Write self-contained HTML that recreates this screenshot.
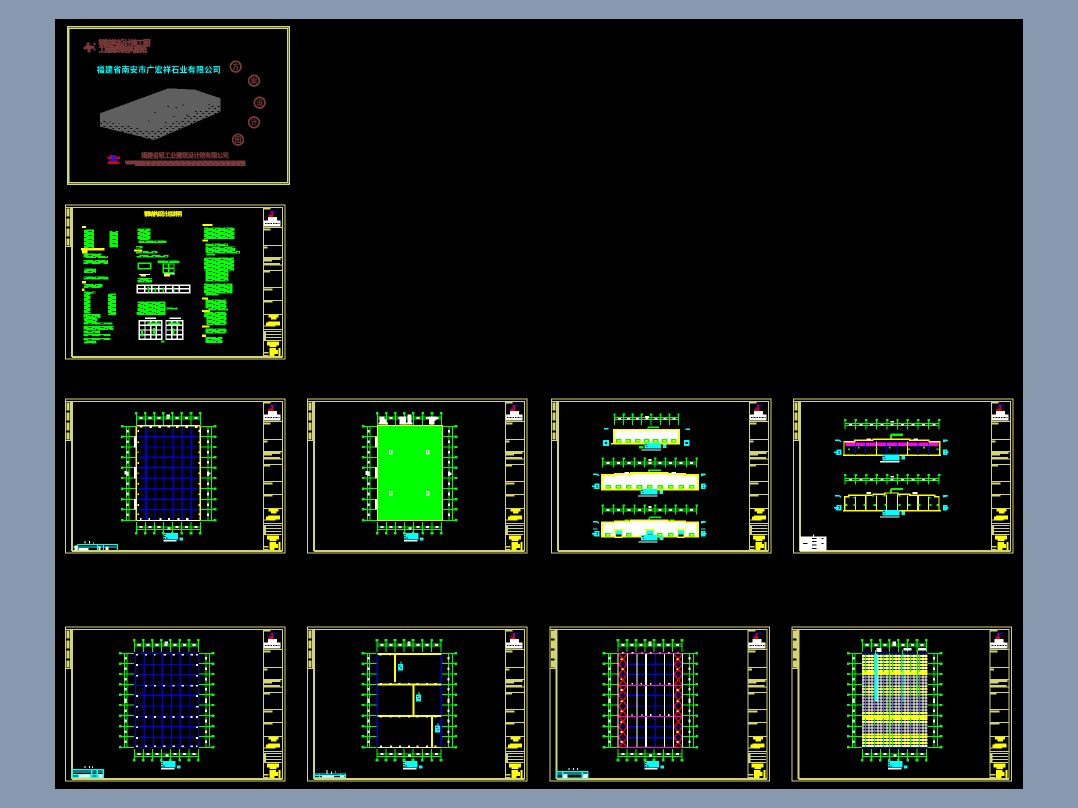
<!DOCTYPE html>
<html lang="zh"><head><meta charset="utf-8"><title>钢结构厂房图纸</title>
<style>
html,body{margin:0;padding:0;width:1078px;height:808px;overflow:hidden;background:#8898af}
svg{display:block}
.f{font-family:"Liberation Sans","Noto Sans CJK SC",sans-serif}
</style></head><body>
<svg width="1078" height="808" viewBox="0 0 1078 808" xmlns="http://www.w3.org/2000/svg" shape-rendering="crispEdges">
<defs>
<pattern id="txt" width="36" height="12" patternUnits="userSpaceOnUse"><rect width="36" height="12" fill="#0f0"/><path d="M0 5h5M14 11h8M29 2h4" stroke="#000" stroke-width="3"/></pattern>
<pattern id="hat" width="27" height="9" patternUnits="userSpaceOnUse"><rect width="27" height="9" fill="#000"/><path d="M0 3H27" stroke="#ff0" stroke-width="5"/><path d="M6 0V9M15 0V9" stroke="#fff" stroke-width="3"/><path d="M22 0V9" stroke="#0f0" stroke-width="3"/></pattern>
<pattern id="hatw" width="27" height="9" patternUnits="userSpaceOnUse"><rect width="27" height="9" fill="#000"/><path d="M0 3H27" stroke="#fff" stroke-width="4"/><path d="M6 0V9M15 0V9" stroke="#fff" stroke-width="3"/><path d="M22 0V9" stroke="#66f" stroke-width="3"/></pattern>
<pattern id="lowwall" width="18" height="15" patternUnits="userSpaceOnUse"><rect width="18" height="15" fill="#5f5f5f"/><path d="M1 4h6M10 11h5" stroke="#000" stroke-width="3"/></pattern>

<g id="frame">
<rect x="16.5" y="11.5" width="658" height="463" fill="none" stroke="#d4d470" stroke-width="3"/>
<rect x="33" y="20" width="6" height="448" fill="#d4d470"/>
<path d="M18 20H667V468" fill="none" stroke="#d4d470" stroke-width="3"/>
<path d="M36 468H667" stroke="#d4d470" stroke-width="6"/>
<rect x="30" y="20" width="9" height="117" fill="#d4d470"/>
<rect x="18" y="135" width="21" height="3" fill="#d4d470"/>
<path d="M24 22V134" stroke="#d4d470" stroke-width="10" stroke-dasharray="24 6"/>
<path d="M610 20V468" stroke="#d4d470" stroke-width="3"/>
<path d="M610 80H667M610 133H667M610 170H667M610 192H667M610 208H667M610 260H667M610 298H667M610 340H667M610 385H667" stroke="#d4d470" stroke-width="3"/>
<path d="M612 85h20M612 139h10M612 174h50M612 178h24M612 189h48M612 212h18M612 265h26M612 302h26" stroke="#d4d470" stroke-width="6"/>
<path d="M612 22h20" stroke="#d4d470" stroke-width="6"/>
<path d="M612 76V58H624V48H651V58H662V76Z" fill="#fff"/>
<rect x="626" y="40" width="14" height="8" fill="#e00000"/>
<rect x="632" y="30" width="7" height="10" fill="#e00000"/>
<rect x="628" y="33" width="6" height="7" fill="#0000e0"/>
<rect x="640" y="28" width="10" height="6" fill="#0000e0"/>
<path d="M615 68h44" stroke="#000" stroke-width="3" stroke-dasharray="5 3"/>
<path d="M625 342h30v7h-6v7h-16v-7h-8ZM624 362h36v11h-14v4h-24v-4h-4v-8h6Z" fill="#ff0"/>
<path d="M612 375h16" stroke="#d4d470" stroke-width="4"/>
<path d="M612 392h52M612 401h52M612 410h52M612 419h52" stroke="#d4d470" stroke-width="3"/>
<path d="M615 390V420" stroke="#d4d470" stroke-width="6"/>
<path d="M621 421h36v12h-8v5h-20v-5h-8ZM628 441h20v6h6v12h-10v6h-16ZM656 441h6v24h-6Z" fill="#ff0"/>
<path d="M612 455h14M612 464h14" stroke="#d4d470" stroke-width="5"/>
</g>

<g id="ax">
<path fill="none" stroke="#00ff00" stroke-width="3" d="M229 55V90M256 55V90M283 55V90M310 55V90M337 55V90M365 55V90M393 55V90M421 55V90M229 381V415M256 381V415M283 381V415M310 381V415M337 381V415M365 381V415M393 381V415M421 381V415M229 66H421M229 72H421M229 396H421M229 404H421M187 94H228M187 125H228M187 156H228M187 187H228M187 218H228M187 249H228M187 281H228M187 313H228M187 343H228M187 376H228M423 94H465M423 125H465M423 156H465M423 187H465M423 218H465M423 249H465M423 281H465M423 313H465M423 343H465M423 376H465M200 94V376M207 94V376M444 94V376M455 94V376"/>
<path fill="none" stroke="#00ff00" stroke-width="7" d="M225 55h8M252 55h8M279 55h8M306 55h8M333 55h8M361 55h8M389 55h8M417 55h8M225 415h8M252 415h8M279 415h8M306 415h8M333 415h8M361 415h8M389 415h8M417 415h8M183 94h8M183 125h8M183 156h8M183 187h8M183 218h8M183 249h8M183 281h8M183 313h8M183 343h8M183 376h8M461 94h8M461 125h8M461 156h8M461 187h8M461 218h8M461 249h8M461 281h8M461 313h8M461 343h8M461 376h8"/>
<path fill="none" stroke="#fff" stroke-width="6" d="M239 69h9M266 69h9M293 69h9M320 61h10M320 69h9M347 69h9M375 69h9M403 69h9M239 396h9M266 396h9M293 396h9M322 400h9M347 396h9M375 396h9M403 396h9M203 105v8M203 136v8M203 168v8M203 198v8M203 229v14M203 262v8M203 292v10M203 325v8M203 355v8M444 105v8M444 136v8M444 168v8M444 198v8M444 229v14M444 262v8M444 292v10M444 325v8M444 355v8"/>
</g>

<g id="ttl">
<rect x="310" y="414" width="44" height="19" fill="#00ffff"/>
<path d="M312 419h4M312 424h4M318 429h4M312 430h3" stroke="#000" stroke-width="3"/>
<rect x="310" y="435" width="40" height="5" fill="#fff"/>
<rect x="358" y="427" width="11" height="10" fill="#00ffff"/>
</g>

<g id="leg">
<path fill="none" stroke="#00ffff" stroke-width="3" d="M36 456H172M52 449H172V466M52 449V466M112 449V466M130 449V466"/>
<path d="M44 452h8v14h-8ZM56 459h30v7H56ZM115 453h6v12h-6ZM136 455h10v10h-10Z" fill="#fff"/>
<path d="M75 438v8M88 438v8M100 442v4" stroke="#fff" stroke-width="3"/>
</g>

<g id="ax8">
<path fill="none" stroke="#00ff00" stroke-width="3" d="M205 58V90M233 58V90M260 58V90M287 58V90M315 58V90M343 58V90M370 58V90M397 58V90M205 67H397M205 74H397"/>
<path fill="none" stroke="#00ff00" stroke-width="6" d="M202 58h7M230 58h7M257 58h7M284 58h7M312 58h7M340 58h7M367 58h7M394 58h7"/>
<path fill="none" stroke="#fff" stroke-width="5" d="M216 71h9M243 71h9M270 71h9M297 66h12M298 71h9M325 71h9M352 71h9M380 71h9"/>
</g>
<g id="ax10">
<path fill="none" stroke="#00ff00" stroke-width="3" d="M170 0V28M202 0V28M233 0V28M265 0V28M296 0V28M327 0V28M358 0V28M389 0V28M421 0V28M452 0V28M170 11H452M170 17H452"/>
<path fill="none" stroke="#00ff00" stroke-width="6" d="M167 0h7M199 0h7M230 0h7M262 0h7M293 0h7M324 0h7M355 0h7M386 0h7M418 0h7M449 0h7"/>
<path fill="none" stroke="#fff" stroke-width="5" d="M182 14h9M213 14h9M245 14h9M276 14h9M307 5h10M307 14h9M338 14h9M369 14h9M401 14h9M432 14h9"/>
</g>
<g id="win"><rect width="17" height="11" fill="#00ff00"/><rect x="4" y="3" width="9" height="5" fill="#ff0"/></g>
<g id="bld">
<path d="M168 6H207V3H255V0H365V3H417V6H456V49H168Z" fill="#fff" stroke="#ff0" stroke-width="5"/>
<path d="M165 50H459" stroke="#ff0" stroke-width="4"/>
</g>
<g id="ec">
<path fill="none" stroke="#00ffff" stroke-width="4" d="M141 0h12l6 4M138 36h16M142 41h10M465 0h14l-14 4M466 36h16M466 41h10"/>
<path d="M148 30h10v12h-10ZM468 30h8v12h-8Z" fill="none" stroke="#00ffff" stroke-width="5"/>
</g>
<g id="cyb"><rect width="50" height="17" fill="#00ffff"/><rect x="-8" y="19" width="58" height="4" fill="#fff"/><rect x="56" y="4" width="11" height="11" fill="#00ffff"/><path d="M3 5h4M6 11h3" stroke="#000" stroke-width="3"/></g>
<g id="dbox"><rect width="11" height="14" fill="#fff"/><rect x="3" y="3" width="5" height="8" fill="#00ff00"/></g>
<g id="cyn"><rect y="8" width="15" height="20" fill="#00ffff"/><path d="M9 0V8" stroke="#00ffff" stroke-width="3"/><path d="M3 14h4M8 20h4" stroke="#000" stroke-width="3"/></g>
</defs>

<rect width="1078" height="808" fill="#8898af"/>
<rect x="55" y="19" width="968" height="770" fill="#000"/>

<!-- Cover sheet -->
<svg x="55" y="15" width="250" height="180" viewBox="0 0 750 540">
<rect x="38.5" y="35.5" width="664" height="472" fill="none" stroke="#d8d870" stroke-width="5"/>
<rect x="42" y="41" width="655" height="462" fill="none" stroke="#d8d870" stroke-width="3"/>
<g fill="#7a3a3a">
<path d="M85 97l10-6V83h9v8l14 2v7l-12 2v11h-8V102l-13 2Z"/>
<rect x="116" y="84" width="6" height="6"/><rect x="116" y="100" width="6" height="6"/>
</g>
<text class="f" x="130" y="92" font-size="23" font-weight="700" fill="#7a3a3a" stroke="#7a3a3a" stroke-width="1.5" textLength="157">钢结构设计施工图</text>
<text class="f" x="130" y="111" font-size="21" font-weight="700" fill="#7a3a3a" stroke="#7a3a3a" stroke-width="1.5" textLength="147">工程建筑结构图纸</text>
<text class="f" x="125" y="173" font-size="24" font-weight="700" fill="#00ffff" textLength="372" lengthAdjust="spacing">福建省南安市广宏祥石业有限公司</text>
<path d="M135 295L340 220L420 224L497 250V290L298 375L135 335Z" fill="url(#lowwall)"/>
<path d="M135 295L340 220L420 224L497 250V262L420 295L300 347L270 345L135 312Z" fill="#5f5f5f"/>
<path d="M298 293h4M338 275h4M362 278h4M382 270h4M420 290h4M460 268h4M330 322h4M355 305h4M280 318h4M395 300h4" stroke="#000" stroke-width="3"/>
<g fill="none" stroke="#7a3a3a" stroke-width="5">
<circle cx="542" cy="155" r="16"/><circle cx="597" cy="197" r="16"/><circle cx="614" cy="263" r="16"/><circle cx="597" cy="322" r="16"/><circle cx="549" cy="374" r="16"/>
</g>
<g class="f" font-size="20" fill="#7a3a3a" text-anchor="middle" font-weight="700">
<text x="542" y="162">方</text><text x="597" y="204">案</text><text x="614" y="270">设</text><text x="597" y="329">计</text><text x="549" y="381">图</text>
</g>
<path d="M157 425h8v-5h16v5h14v7h-10v8h8v7h-34v-7h4v-8h-6Z" fill="#e00000"/>
<path d="M170 420h8v8h8v12h-22v-8h6Z" fill="#1818e0"/>
<text class="f" x="258" y="427" font-size="19" font-weight="700" fill="#7a3a3a" stroke="#7a3a3a" stroke-width=".8" textLength="264">福建省轻工业建筑设计院有限公司</text>
<rect x="210" y="436" width="362" height="8" fill="#7a3a3a"/>
<rect x="240" y="444" width="332" height="9" fill="#7a3a3a"/>
<path d="M270 440h290" stroke="#000" stroke-width="2" stroke-dasharray="3 14"/>
<path d="M270 449h295" stroke="#000" stroke-width="2" stroke-dasharray="4 11"/>
<rect x="212" y="444" width="50" height="5" fill="#7a3a3a"/>
</svg>

<!-- Design notes -->
<svg x="60" y="200" width="230" height="165" viewBox="0 0 690 495">
<g transform="translate(0 3)"><use href="#frame"/></g>
<text class="f" x="252" y="48" font-size="17" font-weight="700" fill="#ff0" stroke="#ff0" stroke-width=".8" textLength="114">钢结构设计总说明</text>
<g fill="url(#txt)">
<rect x="72" y="88" width="30" height="56"/><rect x="148" y="93" width="26" height="50"/><rect x="70" y="160" width="54" height="14"/><rect x="70" y="168" width="74" height="6"/><rect x="70" y="180" width="74" height="12"/><rect x="72" y="205" width="36" height="14"/><rect x="70" y="230" width="76" height="8"/><rect x="72" y="252" width="56" height="12"/><rect x="72" y="275" width="34" height="5"/><rect x="72" y="280" width="20" height="60"/><rect x="144" y="280" width="24" height="65"/><rect x="70" y="342" width="52" height="12"/><rect x="72" y="352" width="40" height="16"/><rect x="70" y="368" width="88" height="6"/><rect x="70" y="378" width="90" height="12"/><rect x="70" y="392" width="50" height="8"/><rect x="70" y="402" width="82" height="6"/><rect x="70" y="414" width="82" height="6"/><rect x="72" y="422" width="38" height="8"/>
<rect x="232" y="85" width="40" height="35"/><rect x="235" y="122" width="85" height="7"/><rect x="228" y="138" width="20" height="7"/><rect x="228" y="153" width="65" height="7"/><rect x="230" y="165" width="96" height="8"/><rect x="292" y="182" width="66" height="7"/><rect x="232" y="234" width="44" height="14"/><rect x="232" y="305" width="85" height="40"/><rect x="300" y="322" width="52" height="6"/><rect x="230" y="335" width="85" height="8"/>
<rect x="432" y="82" width="92" height="35"/><rect x="436" y="130" width="68" height="8"/><rect x="436" y="140" width="90" height="18"/><rect x="440" y="153" width="100" height="7"/><rect x="440" y="162" width="25" height="5"/><rect x="432" y="172" width="90" height="40"/><rect x="436" y="205" width="70" height="40"/><rect x="432" y="250" width="86" height="30"/><rect x="436" y="280" width="40" height="6"/><rect x="436" y="298" width="64" height="28"/><rect x="445" y="325" width="60" height="6"/><rect x="432" y="336" width="68" height="16"/><rect x="440" y="350" width="60" height="25"/><rect x="436" y="385" width="64" height="15"/><rect x="436" y="411" width="52" height="18"/>
</g>
<g fill="#ff0">
<rect x="66" y="78" width="12" height="6"/><rect x="63" y="144" width="70" height="8"/><rect x="66" y="152" width="16" height="8"/><rect x="66" y="243" width="12" height="8"/><rect x="66" y="265" width="8" height="8"/><rect x="222" y="148" width="24" height="6"/><rect x="428" y="72" width="30" height="6"/><rect x="428" y="118" width="16" height="6"/><rect x="426" y="292" width="18" height="6"/><rect x="426" y="330" width="24" height="6"/><rect x="426" y="376" width="22" height="6"/><rect x="426" y="404" width="12" height="7"/><rect x="242" y="222" width="16" height="8"/><rect x="312" y="222" width="18" height="8"/>
</g>
<path d="M237 224h33M312 222h33" stroke="#fff" stroke-width="3"/>
<path d="M235 190h37v16h-37ZM310 192h32v26h-32ZM326 192v26M310 205h32" fill="none" stroke="#00ff00" stroke-width="4"/>
<g fill="none" stroke="#fff" stroke-width="4">
<path d="M232 256h157v22h-157ZM232 266h157M254 256v22M275 256v22M296 256v22M317 256v22M338 256v22M358 256v22"/>
<path d="M238 362h67v56h-67ZM238 376h67M238 390h67M238 404h67M255 362v56M272 362v56M289 362v56"/>
<path d="M318 362h50v56h-50ZM318 376h50M318 390h50M318 404h50M335 362v56M352 362v56"/>
<path d="M255 355h33M328 355h35"/>
</g>
<path d="M262 370h40M246 390v20M282 384v24M325 370h35M340 385v18" stroke="#00ff00" stroke-width="6"/>
<path d="M262 262h4v14M286 262v14M310 262v14M342 262v14" stroke="#00ff00" stroke-width="4"/>
<rect x="303" y="421" width="11" height="7" fill="#00ff00"/>
</svg>

<!-- Plan A: column grid -->
<svg x="60" y="395" width="230" height="165" viewBox="0 0 690 495">
<use href="#frame"/><use href="#ax"/>
<path stroke="#0000d0" stroke-width="4" fill="none" d="M258 94V376M285 94V376M312 94V376M340 94V376M367 94V376M394 94V376M229 125H421M229 156H421M229 187H421M229 218H421M229 250H421M229 281H421M229 313H421M229 344H421"/>
<path d="M258 94V376" stroke="#0000d0" stroke-width="6"/>
<path stroke="#ff0" stroke-width="4" fill="none" d="M229 92H421M229 94V376M421 94V376"/>
<path d="M229 376H421" stroke="#fff" stroke-width="3"/>
<path d="M240 95h8M268 96h8M295 96h8M322 95h8M348 96h8M376 96h8M405 96h8M298 372h6M352 372h6M378 372h8M324 372h6M240 372h4M266 372h4M232 108h5M232 142h5M232 172h3M232 204h5M232 235h3M232 266h5M232 298h5M232 330h5M232 358h5M416 108h5M416 142h3M416 172h3M416 204h5M416 235h5M416 266h5M416 298h3M416 330h3M416 358h5" stroke="#fff" stroke-width="5"/>
<path d="M222 125h8v32h-8ZM222 216h8v34h-8ZM222 312h8v32h-8ZM193 228h6v11h-6ZM441 232h11v7h-11Z" fill="#fff"/>
<use href="#ttl"/><use href="#leg"/>
</svg>

<!-- Plan B: green roof -->
<svg x="302" y="395" width="230" height="165" viewBox="0 0 690 495">
<use href="#frame"/><g transform="translate(-3 0)"><use href="#ax"/></g>
<rect x="226" y="92" width="196" height="284" fill="#00ff00" stroke="#ff0" stroke-width="3"/>
<use href="#dbox" x="261" y="165"/><use href="#dbox" x="372" y="165"/><use href="#dbox" x="261" y="288"/><use href="#dbox" x="372" y="288"/>
<path d="M232 65h15v8h6v10h5v5h-28v-5h2ZM292 65h20v18h20v5h-40ZM316 58h12v30h-12ZM381 64h22v12h-6v12h-16Z" fill="#fff"/>
<path d="M219 125h8v32h-8ZM219 216h8v34h-8ZM219 312h8v32h-8Z" fill="#fff"/>
<path d="M190 228h10v12h-10ZM438 232h10v8h-10Z" fill="#fff"/>
<g transform="translate(-4 0)"><use href="#ttl"/></g>
</svg>

<!-- Elevations -->
<svg x="546" y="395" width="230" height="165" viewBox="0 0 690 495">
<use href="#frame"/>
<use href="#ax8"/>
<path d="M306 97h33M306 97v14" stroke="#00ff00" stroke-width="4"/>
<rect x="204" y="104" width="195" height="40" fill="#fff" stroke="#ff0" stroke-width="5"/>
<path d="M195 146H402" stroke="#ff0" stroke-width="4"/>
<use href="#win" x="210" y="132"/><use href="#win" x="238" y="132"/><use href="#win" x="267" y="132"/><use href="#win" x="293" y="132"/><use href="#win" x="320" y="132"/><use href="#win" x="347" y="132"/><use href="#win" x="375" y="132"/>
<path d="M174 101h14M418 103h14" stroke="#00ffff" stroke-width="5"/>
<path d="M174 138h12v12h-12ZM416 138h12v12h-12Z" fill="none" stroke="#00ffff" stroke-width="5"/>
<g transform="translate(295 144)"><use href="#cyb"/></g>
<path d="M279 157h14" stroke="#00ff00" stroke-width="8"/>

<g transform="translate(0 190)"><use href="#ax10"/></g>
<path d="M306 226h39M310 226v14" stroke="#00ff00" stroke-width="4"/>
<g transform="translate(0 234)"><use href="#bld"/></g>
<g transform="translate(0 238)"><use href="#ec"/></g>
<path d="M235 234h14M376 234h14" stroke="#fff" stroke-width="5"/>
<use href="#win" x="178" y="270"/><use href="#win" x="209" y="270"/><use href="#win" x="240" y="270"/><use href="#win" x="272" y="270"/><use href="#win" x="303" y="270"/><use href="#win" x="334" y="270"/><use href="#win" x="366" y="270"/><use href="#win" x="397" y="270"/><use href="#win" x="429" y="270"/>
<g transform="translate(284 282)"><use href="#cyb"/></g>

<g transform="translate(0 331)"><use href="#ax10"/></g>
<path d="M310 367h35M310 367v14" stroke="#00ff00" stroke-width="4"/>
<g transform="translate(0 376)"><use href="#bld"/></g>
<g transform="translate(0 380)"><use href="#ec"/></g>
<path d="M141 402h14M141 416h14M465 402h14M465 416h14" stroke="#00ffff" stroke-width="4"/>
<path d="M235 375h14M372 375h14" stroke="#00ff00" stroke-width="4"/>
<use href="#win" x="177" y="414"/><use href="#win" x="240" y="414"/><use href="#win" x="333" y="414"/><use href="#win" x="366" y="414"/><use href="#win" x="429" y="414"/>
<g fill="#000" stroke="#ff0" stroke-width="4"><path d="M208 405h20v22h-20ZM302 405h20v22h-20ZM396 405h18v22h-18Z"/></g>
<path d="M208 406h20v12h-20ZM302 406h20v12h-20ZM396 406h18v12h-18Z" fill="#00ffff"/>
<path d="M201 404h32M296 404h32M390 404h30" stroke="#ff0" stroke-width="4"/>
<g transform="translate(285 420)"><use href="#cyb"/></g>
</svg>

<!-- Sections -->
<svg x="788" y="395" width="230" height="165" viewBox="0 0 690 495">
<use href="#frame"/>
<g transform="translate(1 75)"><use href="#ax10"/></g>
<path d="M309 119h36M309 119v12" stroke="#00ff00" stroke-width="7"/>
<g fill="none" stroke="#ff0" stroke-width="4"><path d="M168 180V140H200V136H255V133H365V136H423V140H455V180"/><path d="M165 181H459" stroke-width="4"/></g>
<rect x="172" y="143" width="280" height="10" fill="#ff00ff"/>
<path d="M202 143V180M233 143V180M296 143V180M328 143V180M390 143V180M421 143V180" stroke="#0000d0" stroke-width="3"/>
<path d="M265 140V180M358 140V180" stroke="#ff0" stroke-width="3"/>
<path d="M180 163h6M212 155v6M305 155v6M262 163h6M360 163h6M408 155v6M445 163h6" stroke="#00ff00" stroke-width="5"/>
<path d="M235 133h14M376 133h14" stroke="#fff" stroke-width="5"/>
<g transform="translate(0 136)"><use href="#ec"/></g>
<g transform="translate(284 179)"><use href="#cyb"/></g>

<g transform="translate(1 240)"><use href="#ax10"/></g>
<path d="M309 282h36M309 282v12" stroke="#00ff00" stroke-width="7"/>
<g fill="none" stroke="#ff0" stroke-width="4"><path d="M170 346V305H182V301H255V298H290V294H330V298H365V301H440V305H453V346"/><path d="M165 347H459"/></g>
<path d="M202 305V346M233 302V346M265 302V346M296 298V346M328 298V346M358 302V346M390 302V346M421 305V346" stroke="#ff0" stroke-width="3"/>
<path d="M233 302V346M390 302V346" stroke="#ff0" stroke-width="5"/>
<path d="M172 330h6M196 330h6M226 330h6M256 330h8M290 330h6M332 330h6M360 330h8M392 330h6M424 330h6M446 330h6M196 308h6M252 302h6M286 302h6M332 302h6M422 308h6" stroke="#00ff00" stroke-width="5"/>
<path d="M235 294h14M374 294h14" stroke="#fff" stroke-width="5"/>
<g transform="translate(0 302)"><use href="#ec"/></g>
<g transform="translate(284 345)"><use href="#cyb"/></g>
<rect x="36" y="424" width="80" height="44" fill="#fff"/>
<path d="M45 445h14M72 430h14M72 440h14M72 450h14M72 460h14M100 430h6M100 445h6" stroke="#000" stroke-width="3"/>
<path d="M76 418v6" stroke="#fff" stroke-width="3"/>
</svg>

<!-- Plan G -->
<svg x="60" y="622" width="230" height="165" viewBox="0 0 690 495">
<g transform="translate(0 3)"><use href="#frame"/></g>
<g transform="translate(-6 0)"><use href="#ax"/></g>
<path stroke="#0000d8" stroke-width="3" fill="none" d="M226 94V376M253 94V376M280 94V376M307 94V376M334 94V376M361 94V376M390 94V376M416 94V376M226 94H416M226 127H416M226 157H416M226 190H416M226 220H416M226 252H416M226 283H416M226 314H416M226 347H416M226 376H416"/>
<path d="M253 94V376M307 94V376M361 94V376" stroke="#0000d8" stroke-width="5"/>
<path d="M226 220H416M226 314H416" stroke="#0000d8" stroke-width="5"/>
<path d="M228 98h6M255 98h6M282 98h4M310 98h8M337 98h8M364 98h8M391 98h8M408 98h6M228 129h6M408 129h6M228 161h6M408 161h6M255 191h6M282 191h6M309 191h6M337 191h6M364 191h8M391 191h8M408 191h6M228 222h6M408 222h6M228 254h6M408 254h8M228 285h6M255 285h6M282 285h6M310 285h6M337 285h6M364 285h6M391 285h6M408 285h6M228 316h6M408 316h6M228 348h6M408 348h6M228 373h6M255 373h6M282 373h6M309 373h8M337 373h8M364 373h8M391 373h8M408 373h4" stroke="#fff" stroke-width="5"/>
<g transform="translate(-7 3)"><use href="#ttl"/></g>
<path d="M36 443H130V466H36ZM36 450H130M36 458H130M112 443V466M95 443V466" fill="none" stroke="#00ffff" stroke-width="4"/>
<path d="M55 458h36v9H55ZM116 456h12v11h-12Z" fill="#fff"/>
<path d="M75 432v6M88 432v6M98 434v4" stroke="#fff" stroke-width="3"/>
</svg>

<!-- Plan H -->
<svg x="302" y="622" width="230" height="165" viewBox="0 0 690 495">
<g transform="translate(0 3)"><use href="#frame"/></g>
<g transform="translate(-4 0)"><use href="#ax"/></g>
<path d="M226 94V376M418 94V376" stroke="#0000d0" stroke-width="4"/>
<path d="M226 96H418M226 188H418M226 282H418" stroke="#ff0" stroke-width="6"/>
<path d="M226 376H418" stroke="#ff0" stroke-width="3"/>
<path d="M279 96V180M334 190V280M390 285V376" stroke="#ff0" stroke-width="6"/>
<path d="M233 98h6M262 98h4M234 186h6M262 186h6M290 186h6M318 186h6M344 186h6M372 186h6M398 186h6M234 284h6M262 284h6M290 284h6M318 284h6M344 284h6M372 284h6M398 284h6M234 373h6M264 373h6M291 373h6M318 373h6M344 373h6M372 373h6M398 373h6" stroke="#fff" stroke-width="6"/>
<use href="#cyn" x="288" y="118"/><use href="#cyn" x="342" y="210"/><use href="#cyn" x="399" y="303"/>
<g transform="translate(-7 3)"><use href="#ttl"/></g>
<path d="M36 456H130V466H36ZM36 460H130M52 456V466M115 456V466" fill="none" stroke="#00ffff" stroke-width="3"/>
<path d="M60 460h36v7H60ZM114 460h14v7h-14Z" fill="#fff"/>
<path d="M75 444v12M88 448v8M100 448v3" stroke="#fff" stroke-width="3"/>
</svg>

<!-- Plan I -->
<svg x="544" y="622" width="230" height="165" viewBox="0 0 690 495">
<g transform="translate(2 3)"><use href="#frame"/></g>
<g transform="translate(-7 0)"><use href="#ax"/></g>
<path d="M222 127H416M222 157H416M222 220H416M222 252H416M222 314H416M222 347H416" stroke="#0000d8" stroke-width="4"/>
<path d="M250 94V376M388 94V376M334 94V376" stroke="#0000d8" stroke-width="3"/>
<path d="M279 94V376M306 94V376M361 94V376" stroke="#fff" stroke-width="3"/>
<path d="M306 94V376" stroke="#fff" stroke-width="5"/>
<path d="M222 94H416M222 190H416M222 283H416M222 376H416" stroke="#ff00ff" stroke-width="3"/>
<g id="xs" fill="none" stroke="#ff0000" stroke-width="4">
<path d="M224 96L250 127M250 96L224 127M224 127L250 157M250 127L224 157M224 157L250 190M250 157L224 190M224 190L250 220M250 190L224 220M224 220L250 252M250 220L224 252M224 252L250 283M250 252L224 283M224 283L250 314M250 283L224 314M224 314L250 347M250 314L224 347M224 347L250 376M250 347L224 376"/>
</g>
<use href="#xs" x="166"/>
<path d="M222 94V376M250 94V376M388 94V376M415 94V376" stroke="#fff" stroke-width="3"/>
<path d="M234 92h5M262 92h6M292 92h4M318 92h4M346 92h4M372 92h4M400 92h4M262 185h5M290 185h4M318 185h4M346 185h4M372 185h8M262 279h4M292 279h4M318 279h4M346 279h4M372 279h4M230 112h6M232 142h6M230 172h4M230 204h6M230 238h6M230 268h6M230 300h4M230 330h6M230 360h6M398 112h6M398 142h4M398 204h6M398 238h6M398 268h6M398 330h6M398 360h6" stroke="#fff" stroke-width="5"/>
<g transform="translate(-9 3)"><use href="#ttl"/></g>
<path d="M38 449H132V468H38ZM38 456H132M56 449V468M115 449V468" fill="none" stroke="#00ffff" stroke-width="4"/>
<path d="M57 457h14v11H57ZM117 456h14v12h-14Z" fill="#fff"/>
<path d="M75 438v6M88 438v6M100 438v6" stroke="#fff" stroke-width="3"/>
</svg>

<!-- Plan J -->
<svg x="786" y="622" width="230" height="165" viewBox="0 0 690 495">
<g transform="translate(2 3)"><use href="#frame"/></g>
<use href="#ax"/>
<rect x="228" y="95" width="197" height="65" fill="url(#hat)"/>
<rect x="228" y="160" width="197" height="110" fill="url(#hatw)"/>
<rect x="228" y="190" width="197" height="30" fill="url(#hat)" opacity=".7"/>
<rect x="228" y="270" width="197" height="36" fill="url(#hat)"/>
<rect x="228" y="306" width="197" height="28" fill="url(#hatw)"/>
<rect x="228" y="334" width="197" height="42" fill="url(#hat)"/>
<path d="M228 152H425M228 156H425M228 282H425M228 286H425M228 342H425" stroke="#ff0" stroke-width="4"/>
<path d="M228 95H425M228 377H425" stroke="#0000d0" stroke-width="4"/>
<rect x="266" y="95" width="8" height="140" fill="#00ffff"/>
<path d="M351 95V240" stroke="#00ffff" stroke-width="3"/>
<path d="M395 90V230M310 95V376" stroke="#00ff00" stroke-width="3"/>
<path d="M271 78h16v12h-16ZM352 78h24v8h-24ZM396 78h24v8h-24ZM322 60h8v12h-8Z" fill="#fff"/>
<path d="M269 84v12M350 84v12M394 84v12" stroke="#00ff00" stroke-width="3"/>
<g transform="translate(-4 3)"><use href="#ttl"/></g>
</svg>
</svg>
</body></html>
